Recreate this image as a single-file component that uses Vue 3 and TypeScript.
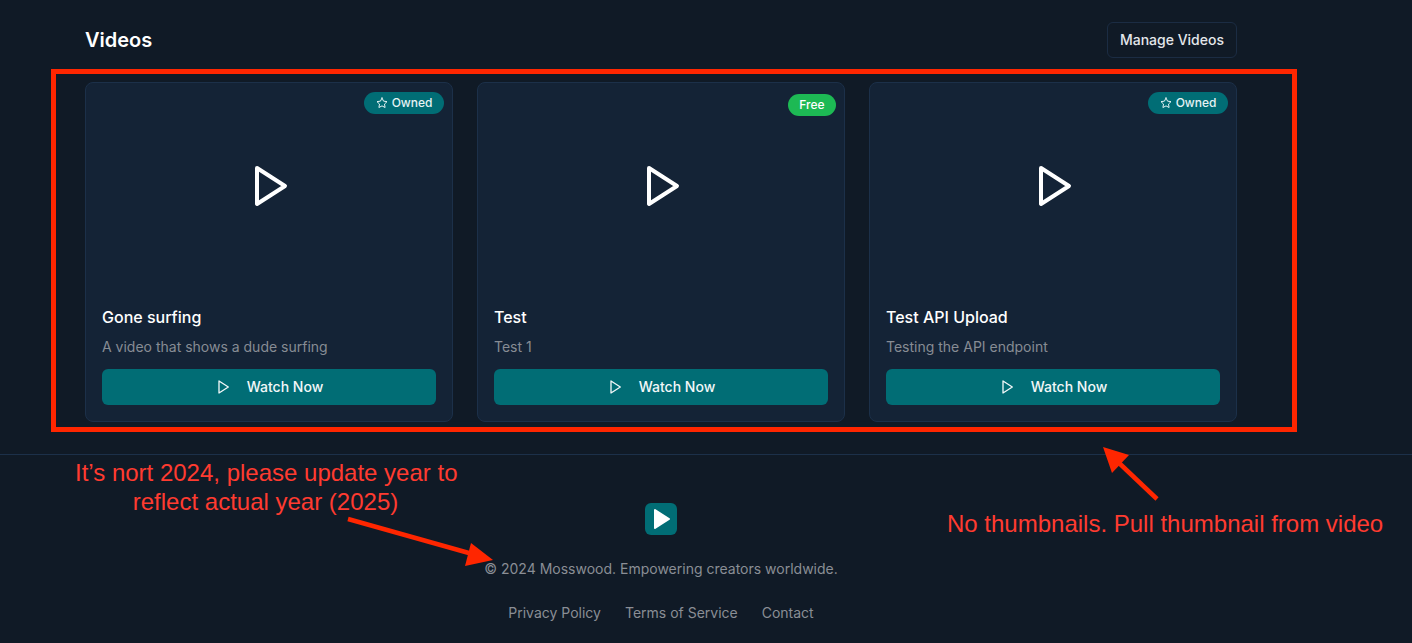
<template>
  <div class="page">
    <main class="videos">
      <header class="videos__head">
        <h2 class="videos__title">Videos</h2>
        <button class="videos__manage" type="button">Manage Videos</button>
      </header>

      <div class="videos__grid">
        <article v-for="video in videos" :key="video.title" class="card">
          <div class="card__thumb">
            <span v-if="video.owned" class="badge badge--owned">
              <svg class="badge__star" viewBox="0 0 24 24" aria-hidden="true">
                <polygon
                  points="12 2 15.09 8.26 22 9.27 17 14.14 18.18 21.02 12 17.77 5.82 21.02 7 14.14 2 9.27 8.91 8.26 12 2"
                />
              </svg>
              Owned
            </span>
            <span v-else class="badge badge--free">Free</span>
            <svg class="card__play" viewBox="0 0 24 24" aria-hidden="true">
              <polygon points="6 3 20 12 6 21 6 3" />
            </svg>
          </div>
          <div class="card__body">
            <h3 class="card__title">{{ video.title }}</h3>
            <p class="card__desc">{{ video.description }}</p>
            <button class="card__watch" type="button">
              <svg class="card__watch-icon" viewBox="0 0 24 24" aria-hidden="true">
                <polygon points="6 3 20 12 6 21 6 3" />
              </svg>
              Watch Now
            </button>
          </div>
        </article>
      </div>
    </main>

    <footer class="footer">
      <div class="footer__inner">
        <div class="footer__logo">
          <svg viewBox="0 0 24 24" aria-hidden="true">
            <polygon points="6 3 20 12 6 21 6 3" />
          </svg>
        </div>
        <p class="footer__copy">© 2024 Mosswood. Empowering creators worldwide.</p>
        <nav class="footer__links">
          <a v-for="link in links" :key="link" href="#">{{ link }}</a>
        </nav>
      </div>
    </footer>

    <!-- review markup drawn over the page -->
    <div class="markup">
      <div class="markup__box"></div>
      <svg class="markup__arrows" viewBox="0 0 1412 643" aria-hidden="true">
        <line x1="348" y1="519" x2="476" y2="555" />
        <polygon points="493,560 471,543 465,566" />
        <line x1="1157" y1="499" x2="1118" y2="462" />
        <polygon points="1103,447 1129,455 1112,473" />
      </svg>
      <p class="markup__note markup__note--year">It’s nort 2024, please update year to<br />reflect actual year (2025)</p>
      <p class="markup__note markup__note--thumb">No thumbnails. Pull thumbnail from video</p>
    </div>
  </div>
</template>

<script setup lang="ts">
interface Video {
  title: string
  description: string
  owned: boolean
}

const videos: Video[] = [
  { title: 'Gone surfing', description: 'A video that shows a dude surfing', owned: true },
  { title: 'Test', description: 'Test 1', owned: false },
  { title: 'Test API Upload', description: 'Testing the API endpoint', owned: true },
]

const links = ['Privacy Policy', 'Terms of Service', 'Contact']
</script>

<style scoped>
.page {
  position: relative;
  height: 643px;
  overflow: hidden;
  background: #101a26;
  color: #fff;
  font-family: Inter, "Liberation Sans", sans-serif;
}

.videos {
  width: 1152px;
  margin-left: 85px;
  padding-top: 22px;
}

.videos__head {
  display: flex;
  align-items: center;
  justify-content: space-between;
  margin-bottom: 24px;
}

.videos__title {
  margin: 0;
  font-size: 20px;
  line-height: 28px;
  font-weight: 600;
}

.videos__manage {
  height: 36px;
  padding: 0 12px;
  border: 1px solid #1b2c43;
  border-radius: 6px;
  background: transparent;
  color: #e4e7eb;
  font: 450 14px/20px Inter, "Liberation Sans", sans-serif;
}

.videos__grid {
  display: grid;
  grid-template-columns: repeat(3, 1fr);
  gap: 24px;
}

.card {
  border: 1px solid #1c3049;
  border-radius: 8px;
  background: #142336;
  overflow: hidden;
}

.card__thumb {
  position: relative;
  display: flex;
  align-items: center;
  justify-content: center;
  height: 206px;
}

.card__play {
  width: 48px;
  height: 48px;
  fill: none;
  stroke: #fff;
  stroke-width: 2;
  stroke-linecap: round;
  stroke-linejoin: round;
}

.badge {
  position: absolute;
  right: 8px;
  display: inline-flex;
  align-items: center;
  gap: 4px;
  height: 22px;
  padding: 0 11.5px;
  border-radius: 999px;
  font-size: 12px;
  line-height: 16px;
  font-weight: 500;
}

.badge--owned {
  top: 9px;
  background: #016d75;
  color: #e6f3f4;
}

.badge--free {
  top: 11px;
  background: #1db954;
  color: #fff;
}

.badge__star {
  width: 12px;
  height: 12px;
  fill: none;
  stroke: currentColor;
  stroke-width: 2;
  stroke-linecap: round;
  stroke-linejoin: round;
}

.card__body {
  padding: 16px;
}

.card__title {
  margin: 0;
  font-size: 16px;
  line-height: 24px;
  font-weight: 550;
}

.card__desc {
  margin: 8px 0 0;
  font-size: 14px;
  line-height: 20px;
  color: #878c94;
}

.card__watch {
  display: flex;
  align-items: center;
  justify-content: center;
  gap: 16px;
  width: 100%;
  height: 36px;
  margin-top: 12px;
  border: 0;
  border-radius: 6px;
  background: #016d75;
  color: #f2f7f8;
  font: 450 14px/20px Inter, "Liberation Sans", sans-serif;
}

.card__watch-icon {
  width: 16px;
  height: 16px;
  fill: none;
  stroke: currentColor;
  stroke-width: 2;
  stroke-linecap: round;
  stroke-linejoin: round;
}

.footer {
  margin-top: 32px;
  border-top: 1px solid #1c3049;
}

.footer__inner {
  display: flex;
  flex-direction: column;
  align-items: center;
  width: 1152px;
  margin-left: 85px;
  padding-top: 48px;
}

.footer__logo {
  display: flex;
  align-items: center;
  justify-content: center;
  width: 32px;
  height: 32px;
  border-radius: 6px;
  background: #016d75;
}

.footer__logo svg {
  width: 24px;
  height: 24px;
  fill: #fff;
  stroke: #fff;
  stroke-width: 2;
  stroke-linejoin: round;
}

.footer__copy {
  margin: 24px 0 0;
  font-size: 14px;
  line-height: 20px;
  color: #8a8e95;
}

.footer__links {
  display: flex;
  gap: 24px;
  margin-top: 24px;
}

.footer__links a {
  font-size: 14px;
  line-height: 20px;
  color: #8a8e95;
  text-decoration: none;
}

.markup {
  position: absolute;
  inset: 0;
  pointer-events: none;
}

.markup__box {
  position: absolute;
  left: 51px;
  top: 69px;
  width: 1246px;
  height: 363px;
  box-sizing: border-box;
  border: 5px solid #ff2600;
}

.markup__arrows {
  position: absolute;
  inset: 0;
  width: 1412px;
  height: 643px;
}

.markup__arrows line {
  stroke: #ff2600;
  stroke-width: 4.5;
}

.markup__arrows polygon {
  fill: #ff2600;
}

.markup__note {
  position: absolute;
  margin: 0;
  color: #ff3b30;
  font-family: "Liberation Sans", Arial, sans-serif;
  font-size: 24px;
  line-height: 29px;
  white-space: nowrap;
}

.markup__note--year {
  left: 75px;
  top: 458px;
  width: 381px;
  text-align: center;
}

.markup__note--thumb {
  left: 947px;
  top: 509px;
}
</style>

<style>
html,
body {
  background: #101a26;
}
</style>
